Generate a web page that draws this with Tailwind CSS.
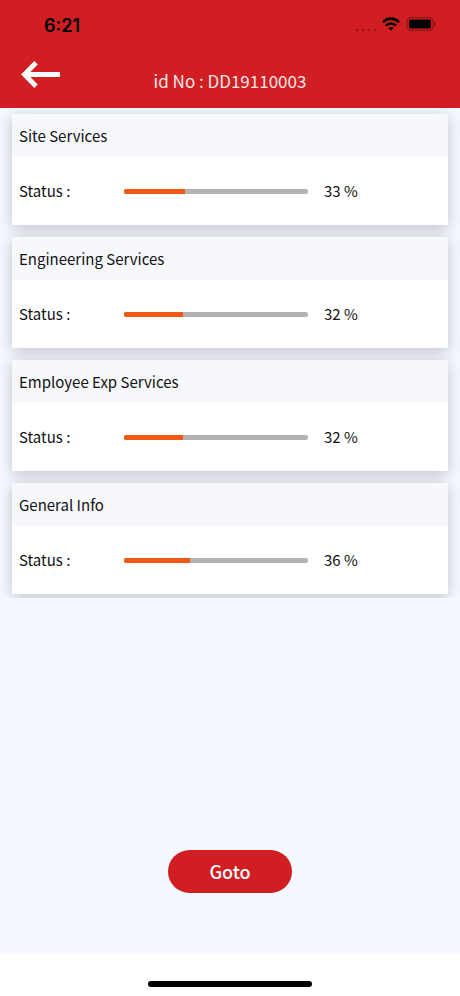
<!DOCTYPE html>
<html lang="en">
<head>
	<meta charset="UTF-8" />
	<meta name="viewport" content="width=device-width, initial-scale=1.0" />
	<title>Services Status</title>
	<script src="https://cdn.jsdelivr.net/npm/@tailwindcss/browser@4"></script>
</head>
<body class="bg-white text-[#111111] font-['Noto_Sans_CJK_SC','Noto_Sans',sans-serif]">
	<div class="min-h-screen flex flex-col">

		<!-- Header -->
		<header class="bg-[#d01e22] h-[108px] shrink-0">
			<!-- Status bar -->
			<div class="h-12 flex items-center justify-between pl-11 pr-6 text-black">
				<span class="pt-1 font-['Inter',sans-serif] text-lg font-semibold">6:21</span>
				<div class="flex items-center gap-[6px]">
					<svg class="w-[21px] h-[4px] mt-3 opacity-25" viewBox="0 0 21 4" fill="currentColor">
						<circle cx="2" cy="2" r="1.3" />
						<circle cx="8" cy="2" r="1.3" />
						<circle cx="14" cy="2" r="1.3" />
						<circle cx="19.5" cy="2" r="1.3" />
					</svg>
					<svg class="w-[18px] h-[14px]" viewBox="0 0 18 14" fill="none" stroke="currentColor" stroke-width="2.6">
						<path d="M1 5.2C5.6 .4 12.4 .4 17 5.2" />
						<path d="M4 8.6C6.8 5.7 11.2 5.7 14 8.6" />
						<path d="M9 13.6L6.3 11C7.8 9.6 10.2 9.6 11.7 11Z" fill="currentColor" stroke="none" />
					</svg>
					<svg class="w-[30px] h-[14px]" viewBox="0 0 30 14">
						<rect x="1" y=".7" width="26" height="12.6" rx="3.8" fill="none" stroke="currentColor" stroke-opacity=".4" />
						<rect x="3" y="2.6" width="22" height="8.8" rx="2" fill="currentColor" />
						<path d="M28.2 4.8C29.8 5.4 29.8 8.6 28.2 9.2Z" fill="currentColor" fill-opacity=".5" />
					</svg>
				</div>
			</div>
			<!-- Title bar -->
			<div class="grid grid-cols-[1fr_auto_1fr] items-center px-5">
				<button type="button" aria-label="Back" class="justify-self-start text-white">
					<svg class="w-[42px] h-[54px]" viewBox="0 0 42 54" fill="none" stroke="currentColor" stroke-width="4.8">
						<path d="M40 26.5H4.5" />
						<path d="M16 14.8L4.5 26.5L16 38.2" />
					</svg>
				</button>
				<h1 class="pt-3 text-[17px] leading-7 text-white/90">id No : DD19110003</h1>
			</div>
		</header>

		<main class="grow flex flex-col bg-[#f4f8ff]">
			<!-- Services -->
			<div class="flex flex-col gap-3 px-3 pt-[6px] pb-1 overflow-hidden">
				<section class="bg-white shadow-[0_3px_14px_rgba(0,0,0,0.22)]">
					<h2 class="bg-[#f6f8fc] px-[7px] text-[15px] leading-[43px]">Site Services</h2>
					<div class="grid grid-cols-[105px_1fr_140px] items-center pl-[7px] text-[15px] leading-[68px]">
						<label for="site">Status :</label>
						<progress id="site" value="33" max="100" class="block appearance-none w-full h-[5px] rounded-xs overflow-hidden [&::-webkit-progress-bar]:bg-[#b3b3b3] [&::-webkit-progress-value]:bg-[#f05a14]"></progress>
						<span class="pl-4">33 %</span>
					</div>
				</section>

				<section class="bg-white shadow-[0_3px_14px_rgba(0,0,0,0.22)]">
					<h2 class="bg-[#f6f8fc] px-[7px] text-[15px] leading-[43px]">Engineering Services</h2>
					<div class="grid grid-cols-[105px_1fr_140px] items-center pl-[7px] text-[15px] leading-[68px]">
						<label for="engineering">Status :</label>
						<progress id="engineering" value="32" max="100" class="block appearance-none w-full h-[5px] rounded-xs overflow-hidden [&::-webkit-progress-bar]:bg-[#b3b3b3] [&::-webkit-progress-value]:bg-[#f05a14]"></progress>
						<span class="pl-4">32 %</span>
					</div>
				</section>

				<section class="bg-white shadow-[0_3px_14px_rgba(0,0,0,0.22)]">
					<h2 class="bg-[#f6f8fc] px-[7px] text-[15px] leading-[43px]">Employee Exp Services</h2>
					<div class="grid grid-cols-[105px_1fr_140px] items-center pl-[7px] text-[15px] leading-[68px]">
						<label for="employee">Status :</label>
						<progress id="employee" value="32" max="100" class="block appearance-none w-full h-[5px] rounded-xs overflow-hidden [&::-webkit-progress-bar]:bg-[#b3b3b3] [&::-webkit-progress-value]:bg-[#f05a14]"></progress>
						<span class="pl-4">32 %</span>
					</div>
				</section>

				<section class="bg-white shadow-[0_3px_14px_rgba(0,0,0,0.22)]">
					<h2 class="bg-[#f6f8fc] px-[7px] text-[15px] leading-[43px]">General Info</h2>
					<div class="grid grid-cols-[105px_1fr_140px] items-center pl-[7px] text-[15px] leading-[68px]">
						<label for="general">Status :</label>
						<progress id="general" value="36" max="100" class="block appearance-none w-full h-[5px] rounded-xs overflow-hidden [&::-webkit-progress-bar]:bg-[#b3b3b3] [&::-webkit-progress-value]:bg-[#f05a14]"></progress>
						<span class="pl-4">36 %</span>
					</div>
				</section>
			</div>

			<button type="button" class="mt-auto mb-[61px] mx-auto px-[41px] rounded-full bg-[#d01e22] text-white text-lg leading-[43px] font-medium">Goto</button>
		</main>

		<!-- Home indicator -->
		<footer class="h-[42px] shrink-0 flex items-end justify-center pb-[9px]">
			<div class="w-[164px] h-[6px] rounded-full bg-black"></div>
		</footer>
	</div>
</body>
</html>
